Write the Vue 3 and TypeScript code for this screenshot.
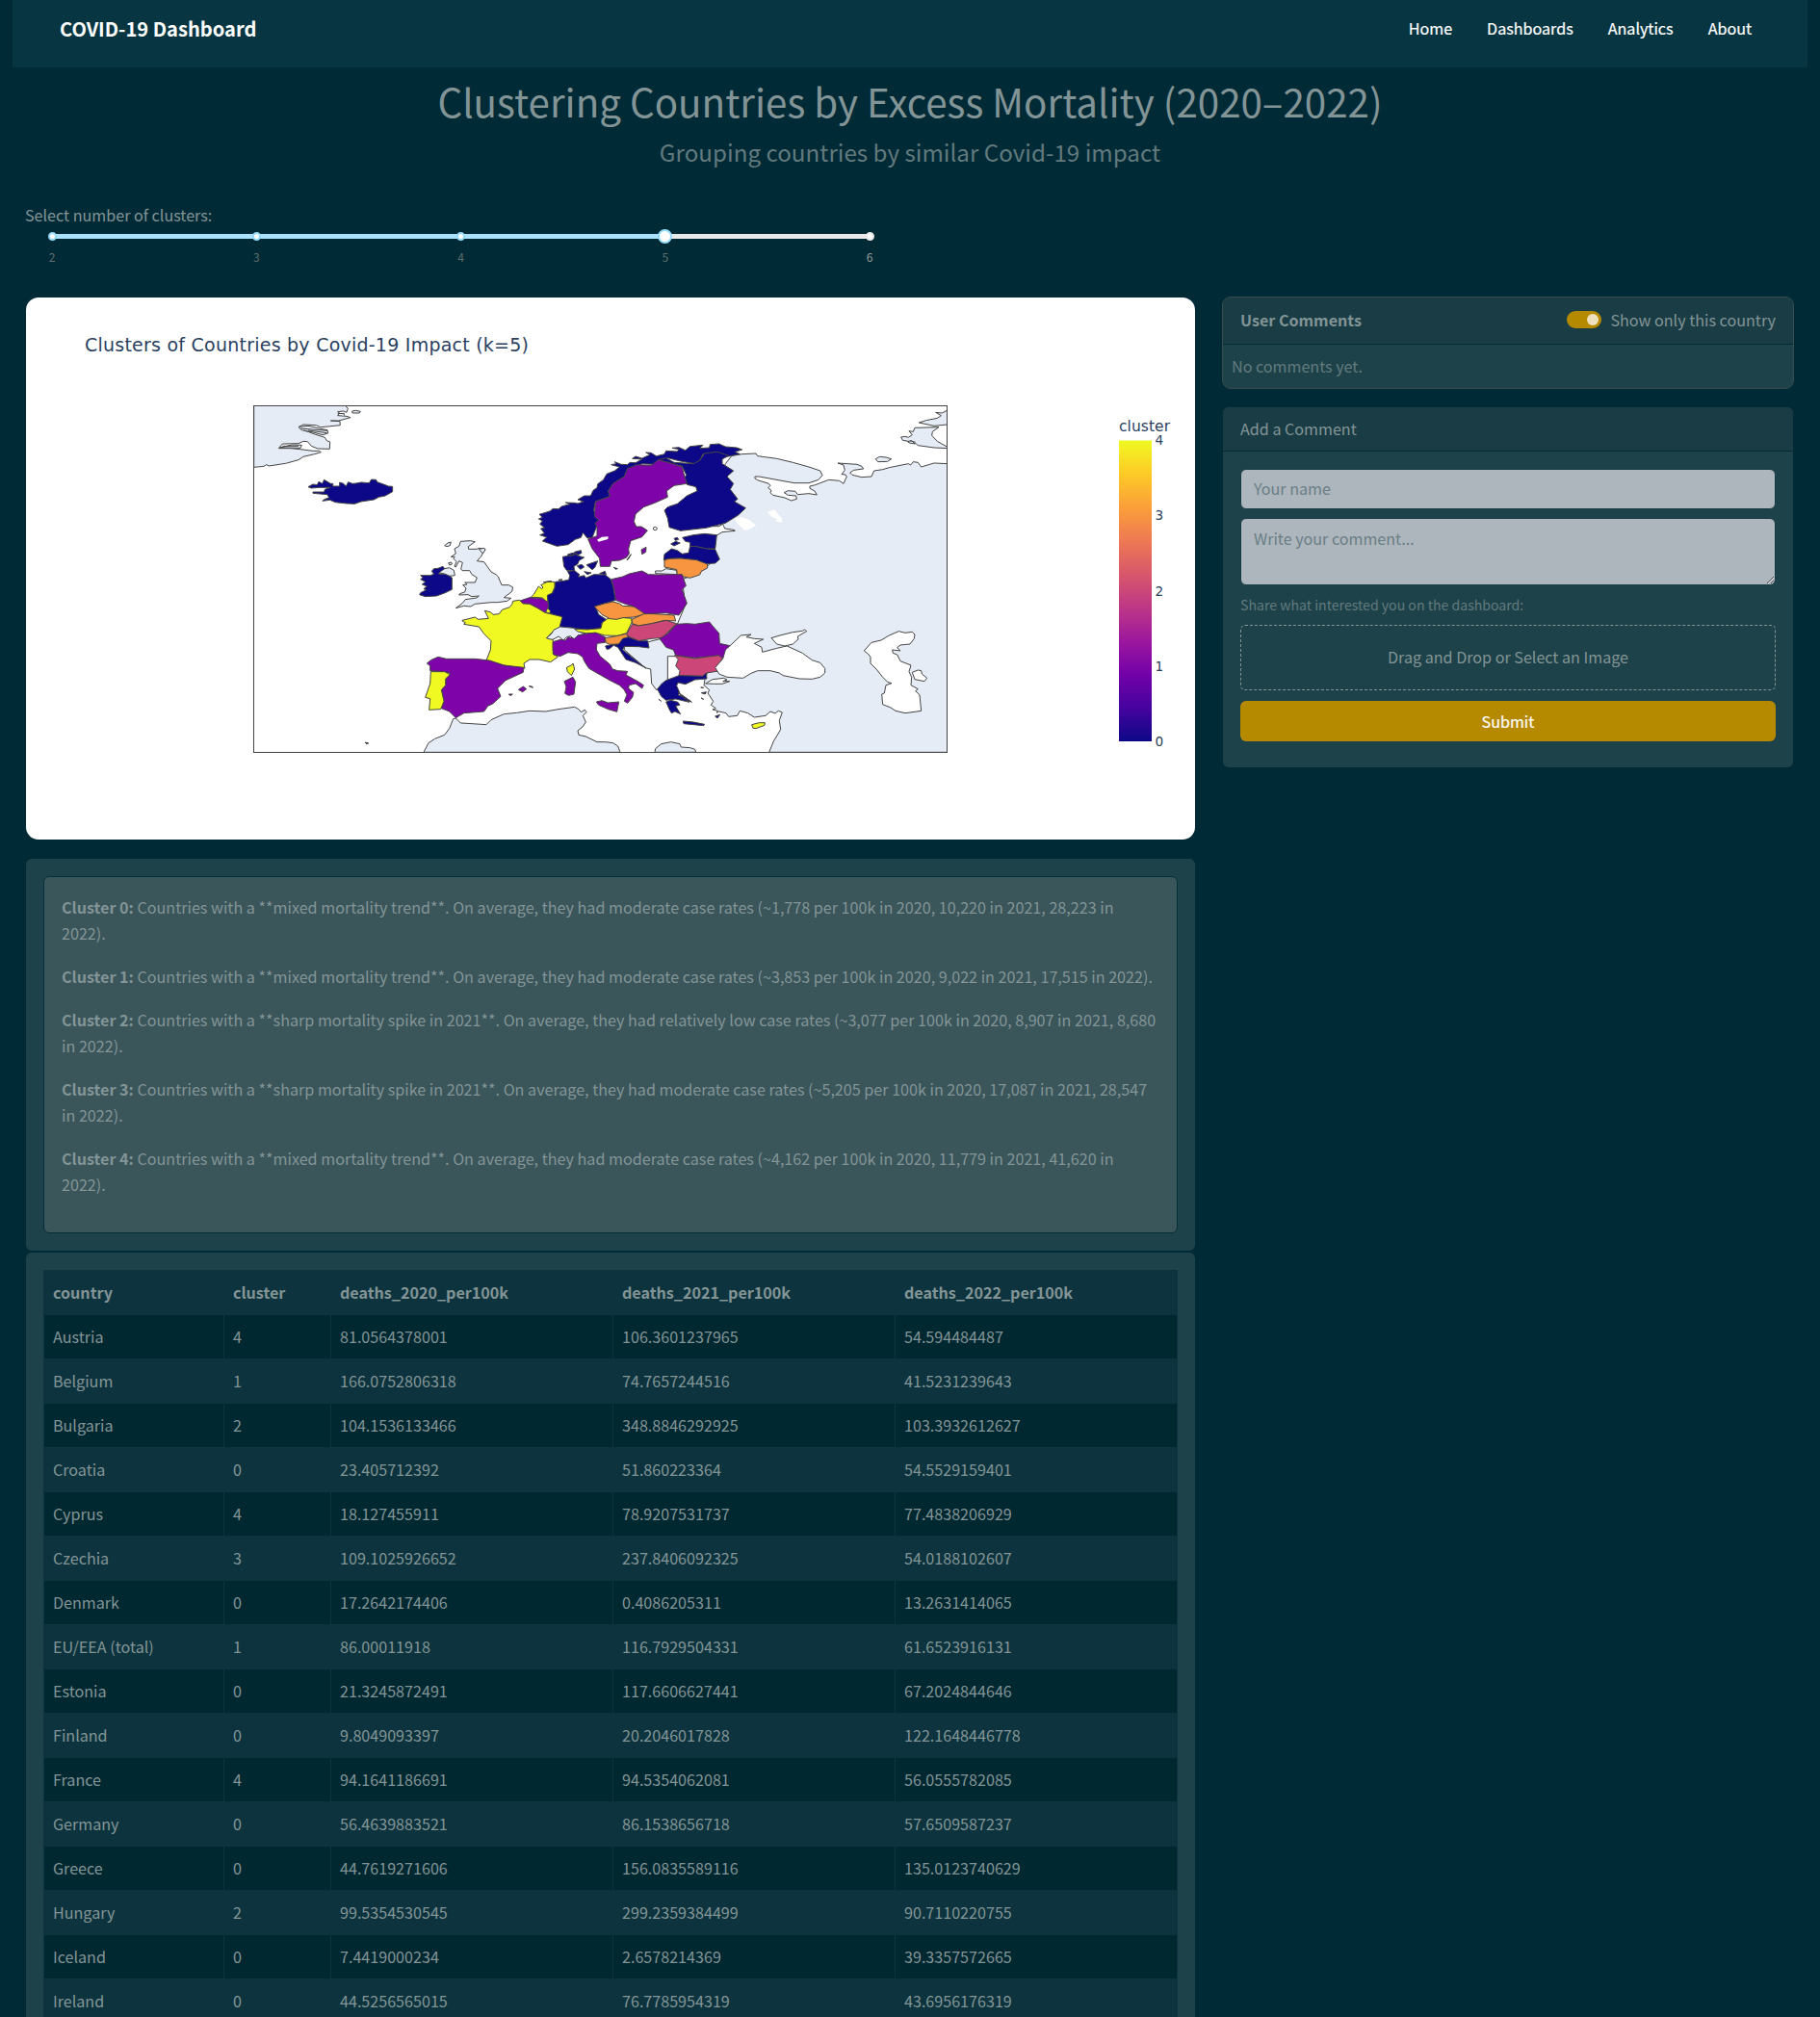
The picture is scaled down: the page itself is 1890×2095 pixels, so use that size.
<script setup lang="ts">
import { ref } from 'vue'

interface Row { country: string; cluster: number; d20: string; d21: string; d22: string }
interface Shape { d: string; c: string }
interface Tile { x: number; y: number; shapes: Shape[] }

const navLinks = ['Home', 'Dashboards', 'Analytics', 'About']
const marks = [2, 3, 4, 5, 6]
const selected = ref(5)
const onlyCountry = ref(true)

const summaries = [
  { name: 'Cluster 0:', text: 'Countries with a **mixed mortality trend**. On average, they had moderate case rates (~1,778 per 100k in 2020, 10,220 in 2021, 28,223 in', rest: '2022).' },
  { name: 'Cluster 1:', text: 'Countries with a **mixed mortality trend**. On average, they had moderate case rates (~3,853 per 100k in 2020, 9,022 in 2021, 17,515 in 2022).', rest: '' },
  { name: 'Cluster 2:', text: 'Countries with a **sharp mortality spike in 2021**. On average, they had relatively low case rates (~3,077 per 100k in 2020, 8,907 in 2021, 8,680', rest: 'in 2022).' },
  { name: 'Cluster 3:', text: 'Countries with a **sharp mortality spike in 2021**. On average, they had moderate case rates (~5,205 per 100k in 2020, 17,087 in 2021, 28,547', rest: 'in 2022).' },
  { name: 'Cluster 4:', text: 'Countries with a **mixed mortality trend**. On average, they had moderate case rates (~4,162 per 100k in 2020, 11,779 in 2021, 41,620 in', rest: '2022).' },
]

const rows: Row[] = [
  { country: 'Austria', cluster: 4, d20: '81.0564378001', d21: '106.3601237965', d22: '54.594484487' },
  { country: 'Belgium', cluster: 1, d20: '166.0752806318', d21: '74.7657244516', d22: '41.5231239643' },
  { country: 'Bulgaria', cluster: 2, d20: '104.1536133466', d21: '348.8846292925', d22: '103.3932612627' },
  { country: 'Croatia', cluster: 0, d20: '23.405712392', d21: '51.860223364', d22: '54.5529159401' },
  { country: 'Cyprus', cluster: 4, d20: '18.127455911', d21: '78.9207531737', d22: '77.4838206929' },
  { country: 'Czechia', cluster: 3, d20: '109.1025926652', d21: '237.8406092325', d22: '54.0188102607' },
  { country: 'Denmark', cluster: 0, d20: '17.2642174406', d21: '0.4086205311', d22: '13.2631414065' },
  { country: 'EU/EEA (total)', cluster: 1, d20: '86.00011918', d21: '116.7929504331', d22: '61.6523916131' },
  { country: 'Estonia', cluster: 0, d20: '21.3245872491', d21: '117.6606627441', d22: '67.2024844646' },
  { country: 'Finland', cluster: 0, d20: '9.8049093397', d21: '20.2046017828', d22: '122.1648446778' },
  { country: 'France', cluster: 4, d20: '94.1641186691', d21: '94.5354062081', d22: '56.0555782085' },
  { country: 'Germany', cluster: 0, d20: '56.4639883521', d21: '86.1538656718', d22: '57.6509587237' },
  { country: 'Greece', cluster: 0, d20: '44.7619271606', d21: '156.0835589116', d22: '135.0123740629' },
  { country: 'Hungary', cluster: 2, d20: '99.5354530545', d21: '299.2359384499', d22: '90.7110220755' },
  { country: 'Iceland', cluster: 0, d20: '7.4419000234', d21: '2.6578214369', d22: '39.3357572665' },
  { country: 'Ireland', cluster: 0, d20: '44.5256565015', d21: '76.7785954319', d22: '43.6956176319' },
]

const land = '#e5ecf6'
const sea = '#ffffff'
const c0 = '#0d0887'
const c1 = '#7e03a8'
const c2 = '#cc4778'
const c3 = '#f89540'
const c4 = '#f0f921'

// Map geometry, split in tiles; units are thirds of a pixel.
const tiles: Tile[] = [
  { x: 0, y: 0, shapes: [
    { c: land, d: 'M1500 175 1532 170 1575 168 1580 176 1640 184 1690 196 1740 210 1775 222 1782 236 1770 250 1740 260 1695 260 1650 252 1585 240 1572 240 1572 246 1580 251 1615 262 1620 268 1613 275 1623 283 1620 290 1628 298 1665 306 1685 315 1702 310 1700 300 1675 298 1663 290 1675 284 1698 286 1705 296 1740 293 1765 297 1758 285 1743 277 1743 270 1760 266 1802 250 1835 253 1848 262 1858 240 1854 234 1842 233 1852 220 1848 204 1830 198 1890 202 1905 208 1910 216 1880 220 1868 228 1875 235 1905 242 1935 240 1943 222 1970 218 1990 212 2050 200 2057 204 2065 194 2080 196 2090 210 2130 198 2172 200V1099H1616L1630 1065 1652 1028 1648 1000 1657 975 1645 970 1635 978 1620 972 1605 985 1570 990 1550 977 1525 970 1517 985 1490 988 1482 977 1460 972 1453 976 1456 970 1440 966 1450 962 1435 952 1442 940 1430 922 1425 915 1430 905 1413 890 1416 872 1426 845 1460 800 1300 800 1300 890 1265 905 1250 885 1247 840 1230 836 1165 780 1165 770 1240 755 1280 745 1330 700 1355 640 1345 560 1400 540 1445 500 1450 425 1470 413 1510 409 1506 406 1478 402 1475 395 1472 388 1460 395 1440 395 1450 300 1480 200Z' },
    { c: land, d: 'M11 211 42 208 50 203 58 207 110 199 150 188 165 178 200 170 220 164 214 160 195 160 155 155 125 152 88 152 100 138 150 137 165 130 178 131 190 145 210 153 247 154 248 132 238 128 232 118 200 108 180 100 160 95 150 86 165 78 205 80 218 86 242 84 280 80 279 68 250 66 275 66 312 56 300 52 272 50 278 42 272 38 290 36 300 40 304 28 296 19 11 19Z' },
    { c: land, d: 'M317 36 328 34 343 37 340 42 318 42ZM150 85 180 82 215 90 240 95 242 105 225 110 195 102 165 96M155 90 240 97M180 96 238 104M92 150 130 141 160 142 156 151ZM100 145 150 145M272 44 292 43 292 50' },
    { c: c0, d: 'M180 272 195 264 208 266 213 256 224 262 230 250 250 262 258 262 256 270 278 270 278 258 290 262 298 270 305 257 318 262 330 261 345 258 370 260 377 249 392 250 395 257 415 264 430 270 443 271 443 287 420 300 400 304 385 312 345 318 325 325 300 324 265 320 248 313 225 316 230 311 245 306 240 296 195 292 195 288 230 288 232 280 250 274 215 274 190 276Z' },
    { c: land, d: 'M655 442 685 440 700 443 679 458 680 466 705 466 712 463 732 466 718 490 706 503 728 506 738 520 750 537 765 545 772 552 783 578 805 578 818 585 815 598 790 617 812 619 800 628 770 632 750 632 700 637 686 645 665 643 640 650 660 635 670 623 705 618 712 612 690 614 678 608 650 609 652 605 668 600 672 588 662 578 675 576 668 570 700 570 706 555 690 545 683 533 660 533 656 528 661 508 650 503 640 522 636 520 642 505 632 495 637 490 625 490 640 480 636 465 650 457Z' },
    { c: land, d: 'M605 455 615 447 625 444 622 455 612 458ZM617 509 626 507 628 513 620 516ZM712 466 728 463 732 468 724 480ZM588 540 600 528 620 524 634 532 637 548 620 550 605 543Z' },
    { c: c0, d: 'M565 535 572 527 585 526 600 520 605 527 592 536 586 543 608 545 620 550 628 555 628 592 605 603 580 612 545 614 527 608 530 602 548 593 540 590 550 582 535 576 545 568 530 560 538 555 530 548 560 548 572 544Z' },
  ] },
  { x: 1440, y: 0, shapes: [
    { c: land, d: 'M508 185 520 178 540 180 557 185 545 193 515 194ZM732 33 715 42 695 40 712 50 700 58 665 65 643 72 690 82 732 78M732 152 690 150 640 143 634 138 610 130 592 127 587 117 600 115 610 118 622 110 612 98 625 100 630 88 705 86 685 100 683 112 700 130 732 148' },
    { c: land, d: 'M608 131 620 128 630 138 612 135ZM615 128 632 133' },
  ] },
  { x: 720, y: 0, shapes: [
    { c: c0, d: 'M180 358 200 352 215 347 222 340 240 341 250 333 275 326 262 321 290 322 300 324 318 318 300 312 320 300 340 300 348 283 360 275 362 263 380 250 390 232 415 222 430 210 404 203 420 200 415 194 435 202 455 203 462 196 480 197 500 186 470 184 480 177 500 183 525 172 512 165 528 166 545 176 570 170 575 160 610 162 615 155 594 151 615 149 635 158 650 146 690 142 680 152 710 150 712 140 740 138 760 147 795 150 812 156 790 163 805 170 765 178 750 170 735 163 690 170 680 190 665 200 620 192 580 182 550 195 535 202 500 200 480 212 455 215 445 240 410 262 395 285 400 302 355 318 350 345 365 378 355 405 345 430 330 432 316 415 310 430 292 436 270 452 235 457 190 441 203 429 182 422 196 417 185 402 197 400 182 388 190 378 178 372 190 367Z' },
    { c: c0, d: 'M550 188 575 182 600 196 660 200 680 190 695 168 735 163 770 175 750 186 750 200 785 222 765 240 785 262 775 280 798 310 788 318 823 338 800 360 760 385 700 400 620 409 585 398 580 370 570 345 580 335 610 325 640 300 672 285 668 272 640 265 632 245 638 235 625 208Z' },
    { c: c1, d: 'M550 188 590 198 625 210 630 230 640 262 600 268 577 285 580 304 540 322 505 335 480 357 475 380 482 396 498 396 517 408 500 428 465 440 458 465 460 480 452 492 430 501 405 503 400 520 370 520 368 495 345 465 332 435 360 425 360 400 354 385 365 376 352 365 355 318 400 302 395 285 410 262 445 240 455 215 485 203 530 205Z' },
    { c: c1, d: 'M498 468 513 460 512 475 500 482ZM453 500 466 482 458 497Z' },
    { c: sea, d: 'M535 402A6 5 0 1 0 547 402A6 5 0 1 0 535 402Z' },
    { c: c0, d: 'M253 490 285 485 290 475 310 470 312 478 298 486 320 492 304 502 300 512 288 520 290 535 265 532 257 520ZM268 483 285 478 300 481 272 488ZM298 518 312 514 320 522 308 529ZM327 515 362 503 354 522 345 530ZM412 523 424 527 418 529ZM320 536 342 540 330 545ZM378 540 388 545 383 550Z' },
    { c: c0, d: 'M626 430 660 422 695 418 733 422 728 465 700 465 670 458 650 457 650 445 635 442ZM590 450 605 442 619 447 600 456ZM600 433 610 430 614 436 604 439Z' },
    { c: c0, d: 'M568 500 570 482 592 465 610 470 625 481 645 478 650 457 670 458 700 465 728 467 742 498 728 510 700 512 670 500 620 495 590 496Z' },
    { c: land, d: 'M542 534 562 534 575 527 608 532 610 545 542 542Z' },
    { c: c3, d: 'M570 500 585 496 620 495 670 500 704 513 704 525 685 535 680 546 650 556 610 548 608 530 570 522Z' },
  ] },
  { x: 720, y: 540, shapes: [
    { c: land, d: 'M-180 559-165 530-145 517-115 505-100 485-88 455-80 453-65 468-30 470 15 473 30 458 70 440 110 436 150 430 200 432 240 425 290 418 303 425 310 434 322 427 327 434 316 445 325 465 315 480 300 492 303 505 325 510 360 527 385 527 410 530 425 540 432 559ZM540 559 542 548 560 533 590 527 618 533 622 543 650 545 665 550 668 559Z' },
    { c: c0, d: 'M230 28 255 25 272 22 275 8 268-5 290-7 305 5 302 13 320 8 325 16 350 5 385 6 403 20 410 40 418 85 355 105 365 130 388 145 375 155 372 173 330 177 290 173 240 168 250 140 210 125 205 70 222 62 228 45ZM240 22 252 21ZM368 2 385-5 388 5Z' },
    { c: c4, d: 'M152 78 163 67 178 42 188 50 192 45 185 38 205 28 228 28 228 45 220 63 205 70 207 95 190 78 165 76ZM193 29 218 26Z' },
    { c: c1, d: 'M120 87 150 77 190 80 208 92 208 120 198 124 175 110 150 97 130 96Z' },
    { c: c4, d: 'M200 122 206 110 214 118 213 127Z' },
    { c: c4, d: 'M98 88 118 85 130 96 150 97 175 110 198 124 252 137 243 170 225 180 203 203 222 206 226 235 222 252 238 262 215 278 180 270 150 270 132 282 135 297 100 294 70 288 40 280 15 273 28 240 30 212 8 190 -8 168-55 160-50 155-60 150-60 148-20 138-10 145 22 142 10 118 28 122 36 130 55 128 64 115 88 107 95 98Z' },
    { c: land, d: 'M203 203 218 190 225 178 245 168 288 172 302 182 325 190 300 195 288 207 278 197 265 200 255 210 240 198 222 208 210 206Z' },
    { c: c4, d: 'M290 175 330 177 372 173 376 156 392 143 425 138 468 142 468 155 452 188 425 196 385 195 360 188 325 188 300 183Z' },
    { c: c3, d: 'M352 105 385 95 410 90 430 96 440 103 475 105 510 122 505 130 475 138 440 140 420 145 400 143 375 130Z' },
    { c: c3, d: 'M468 145 508 127 540 128 600 132 605 150 570 148 530 158 490 165 470 158Z' },
    { c: c2, d: 'M452 190 470 160 490 165 530 158 575 148 608 158 590 175 565 202 530 205 490 212 460 200Z' },
    { c: c3, d: 'M385 203 415 198 450 190 458 200 440 208 430 222 400 223 388 218Z' },
    { c: c0, d: 'M386 228 400 225 428 222 440 205 458 200 490 212 518 212 522 234 490 230 445 229 440 240 465 260 500 288 513 297 480 280 450 270 425 232 412 226 398 237 390 238Z' },
    { c: c1, d: 'M405 20 440 12 460 3 500-6 520 5 550 6 595 5 625 5 637 40 625 52 640 95 615 132 575 125 510 128 475 105 445 96 418 85 413 50Z' },
    { c: c1, d: 'M608 160 640 158 665 160 710 153 722 168 740 188 742 220 778 228 755 268 740 258 700 262 665 265 605 257 598 240 575 232 555 205 580 190Z' },
    { c: c2, d: 'M602 257 665 267 700 262 738 257 752 266 733 290 740 306 700 312 690 322 615 320 618 305 605 290 613 270Z' },
    { c: c0, d: 'M548 362 562 345 575 335 615 320 690 322 700 312 702 330 665 333 635 347 612 342 608 352 618 375 612 380 632 388 648 403 605 393 575 397 560 385ZM575 402 590 397 612 403 618 412 605 415 620 440 603 432 592 437 585 425ZM628 462 660 465 695 472 692 476 630 470ZM612 372 652 400 655 403 635 395ZM685 374 700 371 697 378ZM684 390 692 394ZM728 447 743 442 735 453ZM552 394 560 400ZM683 357 692 358Z' },
    { c: c1, d: 'M222 215 245 208 262 210 270 200 290 205 300 195 325 190 355 186 385 200 385 217 360 220 358 240 370 260 400 285 408 300 425 305 455 307 450 318 490 340 505 350 500 360 480 345 460 350 458 360 474 373 470 388 455 406 445 400 453 380 445 365 430 350 400 335 370 318 335 298 320 275 315 262 300 252 270 248 245 260 225 255 222 240Z' },
    { c: c1, d: 'M358 402 375 398 395 405 428 402 422 433 395 425 365 412ZM258 338 285 325 293 340 288 378 272 382 260 376 264 355Z' },
    { c: c4, d: 'M265 295 280 288 285 282 290 300 280 320 268 308Z' },
    { c: c1, d: 'M115 364 130 354 140 362 128 371ZM148 353 158 354 160 358ZM85 378 97 378 90 383Z' },
    { c: c1, d: 'M-170 282-158 272-135 262-110 268-20 268 25 273 70 288 132 295 130 310 75 335 50 360 60 385 35 408 20 415 8 432-55 437-80 452-100 432-125 422-117 400-125 362-112 350-110 325-98 312-120 308-160 305-160 290Z' },
    { c: c4, d: 'M-158 308-115 308-98 317-112 330-112 350-125 365-117 400-127 425-163 427-160 392-175 388-160 345Z' },
    { c: c0, d: 'M-363 528-352 531-358 533Z' },
  ] },
  { x: 1440, y: 540, shapes: [
    { c: sea, d: 'M60 222 88 195 120 192 105 200 130 205 158 207 130 220 153 232 155 247 200 235 222 230 232 228 280 250 310 272 335 280 350 298 350 312 335 325 310 331 270 330 220 320 208 312 180 305 140 305 120 313 95 328 45 325 20 315 8 295 32 268 40 240ZM183 203 210 195 250 185 280 181 287 177 293 182 265 198 267 207 250 222 225 228 200 222ZM-22 345 0 332 35 328 45 333 32 338 53 338 30 346 5 346Z' },
    { c: sea, d: 'M472 243 495 217 525 210 550 195 580 182 600 187 622 184 630 192 628 205 615 222 585 225 575 233 585 243 560 240 562 250 575 255 585 275 618 288 612 308 620 325 618 350 640 362 632 368 645 380 650 430 630 433 600 437 570 430 555 420 530 410 527 378 535 375 540 350 558 344 545 340 530 325 510 300 492 282 492 262 484 252ZM622 310 640 303 650 305 652 315 668 328 660 338 630 332Z' },
    { c: c4, d: 'M122 473 145 467 163 467 162 475 135 485 126 484Z' },
  ] },
]

const lakes = 'M1508 370 1530 366 1555 375 1575 392 1560 402 1540 408 1532 400 1518 388ZM1610 350 1620 348 1632 342 1655 370 1658 382 1645 382 1635 378 1642 373 1625 366ZM1080 437 1095 428 1115 427 1114 435 1085 443Z'

const scaleStops = ['#0d0887', '#46039f', '#7201a8', '#9c179e', '#bd3786', '#d8576b', '#ed7953', '#fb9f3a', '#fdca26', '#f0f921']
</script>

<template>
  <div class="page">
    <header class="navbar">
      <span class="brand">COVID-19 Dashboard</span>
      <nav class="links"><a v-for="l in navLinks" :key="l">{{ l }}</a></nav>
    </header>

    <h1>Clustering Countries by Excess Mortality (2020–2022)</h1>
    <h2>Grouping countries by similar Covid-19 impact</h2>

    <section class="picker">
      <label>Select number of clusters:</label>
      <div class="slider">
        <div class="fill" />
        <button
          v-for="m in marks" :key="m" class="stop"
          :class="{ on: m < selected, handle: m === selected, last: m > selected }"
          @click="selected = m"
        ><i /><span>{{ m }}</span></button>
      </div>
    </section>

    <main class="columns">
      <div class="left">
        <div class="plot">
          <svg width="1214" height="563" viewBox="27 309 1214 563">
            <defs>
              <linearGradient id="plasma" x1="0" y1="1" x2="0" y2="0">
                <stop v-for="(s, i) in scaleStops" :key="s" :offset="i / 9" :stop-color="s" />
              </linearGradient>
              <clipPath id="frame"><rect x="11" y="18" width="2161" height="1081" /></clipPath>
            </defs>
            <text class="plot-title" x="88" y="365" textLength="461">Clusters of Countries by Covid-19 Impact (k=5)</text>
            <g transform="translate(260 415) scale(.33333)" stroke="#444" stroke-width="3" stroke-linejoin="round">
              <g clip-path="url(#frame)">
                <g v-for="(t, i) in tiles" :key="i" :transform="`translate(${t.x} ${t.y})`">
                  <path v-for="(s, j) in t.shapes" :key="j" :d="s.d" :fill="s.c" />
                </g>
                <path :d="lakes" fill="#fff" stroke="none" />
              </g>
            </g>
            <rect x="263.5" y="421.5" width="720" height="360" fill="none" stroke="#444" />
            <text class="bar-title" x="1162" y="448" textLength="53">cluster</text>
            <rect x="1162" y="457.5" width="34" height="312.5" fill="url(#plasma)" />
            <text v-for="n in 5" :key="n" class="tick" x="1199.5" :y="775 - (n - 1) * 78.2">{{ n - 1 }}</text>
          </svg>
        </div>

        <div class="card summary">
          <div class="inner">
            <p v-for="s in summaries" :key="s.name"><b>{{ s.name }}</b> {{ s.text }}<template v-if="s.rest"><br>{{ s.rest }}</template></p>
          </div>
        </div>

        <div class="card data">
          <table>
            <colgroup><col class="w1"><col class="w2"><col class="w3"><col class="w3"><col class="w4"></colgroup>
            <thead>
              <tr><th>country</th><th>cluster</th><th>deaths_2020_per100k</th><th>deaths_2021_per100k</th><th>deaths_2022_per100k</th></tr>
            </thead>
            <tbody>
              <tr v-for="r in rows" :key="r.country">
                <td>{{ r.country }}</td><td>{{ r.cluster }}</td><td>{{ r.d20 }}</td><td>{{ r.d21 }}</td><td>{{ r.d22 }}</td>
              </tr>
            </tbody>
          </table>
        </div>
      </div>

      <aside class="right">
        <div class="card comments">
          <div class="head">
            <b>User Comments</b>
            <label class="toggle" @click="onlyCountry = !onlyCountry"><i :class="{ on: onlyCountry }" />Show only this country</label>
          </div>
          <div class="empty">No comments yet.</div>
        </div>
        <div class="card form">
          <div class="head">Add a Comment</div>
          <div class="body">
            <input placeholder="Your name">
            <textarea placeholder="Write your comment..." />
            <small>Share what interested you on the dashboard:</small>
            <div class="drop">Drag and Drop or Select an Image</div>
            <button class="submit">Submit</button>
          </div>
        </div>
      </aside>
    </main>
  </div>
</template>

<style>
body { margin: 0; background: #002b36; }
</style>

<style scoped>
* { box-sizing: border-box; }
.page {
  width: 1890px; height: 2095px; overflow: hidden; padding: 0 13px;
  background: #002b36; color: #839496;
  font: 16.12px/27px "Noto Sans CJK SC", "Noto Sans CJK JP", sans-serif;
}
.navbar { height: 70px; padding: 0 58px 12px 49px; background: #073642; color: #fff; display: flex; justify-content: space-between; align-items: center; }
.brand { font-size: 20.1px; font-weight: 700; }
.links { display: flex; gap: 36px; -webkit-text-stroke: .2px #fff; }
h1 { margin: 8px 0 0; height: 54px; font-size: 40.3px; line-height: 54px; font-weight: 400; text-align: center; }
h2 { margin: 10px 0 0; height: 32px; font-size: 24.2px; line-height: 32px; font-weight: 400; text-align: center; color: #627a7e; }
.picker { height: 135px; padding: 36px 13px 0; }
.picker label { display: block; height: 27px; }
.slider {
  width: 849px; height: 5px; margin: 6px 0 0 28px; border-radius: 5px; background: #e9e9e9;
  display: flex; justify-content: space-between; position: relative;
}
.fill { position: absolute; left: 0; top: 0; width: 75%; height: 5px; border-radius: 5px; background: #abe2fb; }
.stop { position: relative; width: 0; height: 5px; padding: 0; border: 0; background: none; font: 12.1px/18px "Noto Sans CJK SC", sans-serif; color: #5f6d6f; display: flex; flex-direction: column; align-items: center; }
.stop i { flex: none; width: 9px; height: 9px; margin-top: -2px; border-radius: 50%; background: #fff; border: 2px solid #96dbfa; }
.stop.last { color: #999; }
.stop.last i { border-color: #e9e9e9; }
.stop.handle i { width: 15px; height: 15px; margin: -5px 0 -3px; }
.stop span { margin-top: 8px; }
.columns { display: flex; align-items: flex-start; gap: 29px; padding: 0 14px; }
.left { width: 1214px; }
.right { width: 592px; }
.plot { height: 563px; border-radius: 13px; background: #fff; overflow: hidden; }
.plot svg { display: block; }
.plot text { font-family: "DejaVu Sans", sans-serif; fill: #2a3f5f; }
.plot-title { font-size: 19px; }
.bar-title { font-size: 15.5px; }
.tick { font-size: 13.6px; }
.card { background: #1e4249; border-radius: 6px; }
.summary { height: 407px; margin-top: 20px; padding: 18px; }
.inner { height: 371px; padding: 18px; border: 1px solid #052f39; border-radius: 6px; background: #3a565b; white-space: nowrap; }
.inner p { margin: 0 0 18px; font-size: 16.14px; }
.data { margin-top: 2px; padding: 18px; height: 800px; }
table { width: 1178px; table-layout: fixed; border-collapse: separate; border-spacing: 0; }
.w1 { width: 187px; }
.w2 { width: 111px; }
.w3 { width: 293px; }
.w4 { width: 294px; }
th, td { height: 46px; padding: 0 9px; text-align: left; border: solid #0d343e; border-width: 0 0 1px 1px; }
th:last-child, td:last-child { border-right-width: 1px; }
th { height: 47px; background: #0d343e; }
tbody tr:nth-child(odd) td { background: #002831; }
tbody tr:nth-child(even) td { background: #0d343e; }
.head { display: flex; justify-content: space-between; align-items: center; padding: 0 18px; background: #1a3d45; border-bottom: 1px solid #002b36; }
.comments { height: 96px; margin: -1px -1px 0; border: 1px solid #3b4a4c; border-radius: 9px; overflow: hidden; }
.comments .head { height: 49px; padding-bottom: 2px; }
.empty { padding: 9px; color: #627a7e; }
.toggle { display: flex; align-items: center; gap: 9px; }
.toggle i { width: 36px; height: 18px; border-radius: 9px; background: #adb5bd; display: flex; align-items: center; padding: 0 3px; }
.toggle i::after { content: ""; width: 12px; height: 12px; border-radius: 50%; background: #ece1bc; }
.toggle i.on { background: #b58900; justify-content: flex-end; }
.form { height: 374px; margin-top: 19px; overflow: hidden; }
.form .head { height: 46px; }
.body { padding: 18px; display: flex; flex-direction: column; }
input, textarea { font: inherit; border: 1px solid #1a3d45; border-radius: 6px; background: #adb5bd; padding: 6px 13px; margin: 0; outline: 0; }
input { height: 42px; padding-bottom: 8px; }
textarea { height: 70px; margin-top: 9px; padding-top: 7px; }
::placeholder { color: #697f84; opacity: 1; }
small { font-size: 14.1px; line-height: 24px; margin-top: 8px; color: #627a7e; }
.drop { height: 68px; margin-top: 9px; border: 1px dashed #839496; border-radius: 5px; text-align: center; line-height: 65px; }
.submit { height: 42px; margin-top: 11px; padding: 0; border: 0; border-radius: 6px; background: #b58900; color: #fff; font: inherit; -webkit-text-stroke: .2px #fff; }
</style>
